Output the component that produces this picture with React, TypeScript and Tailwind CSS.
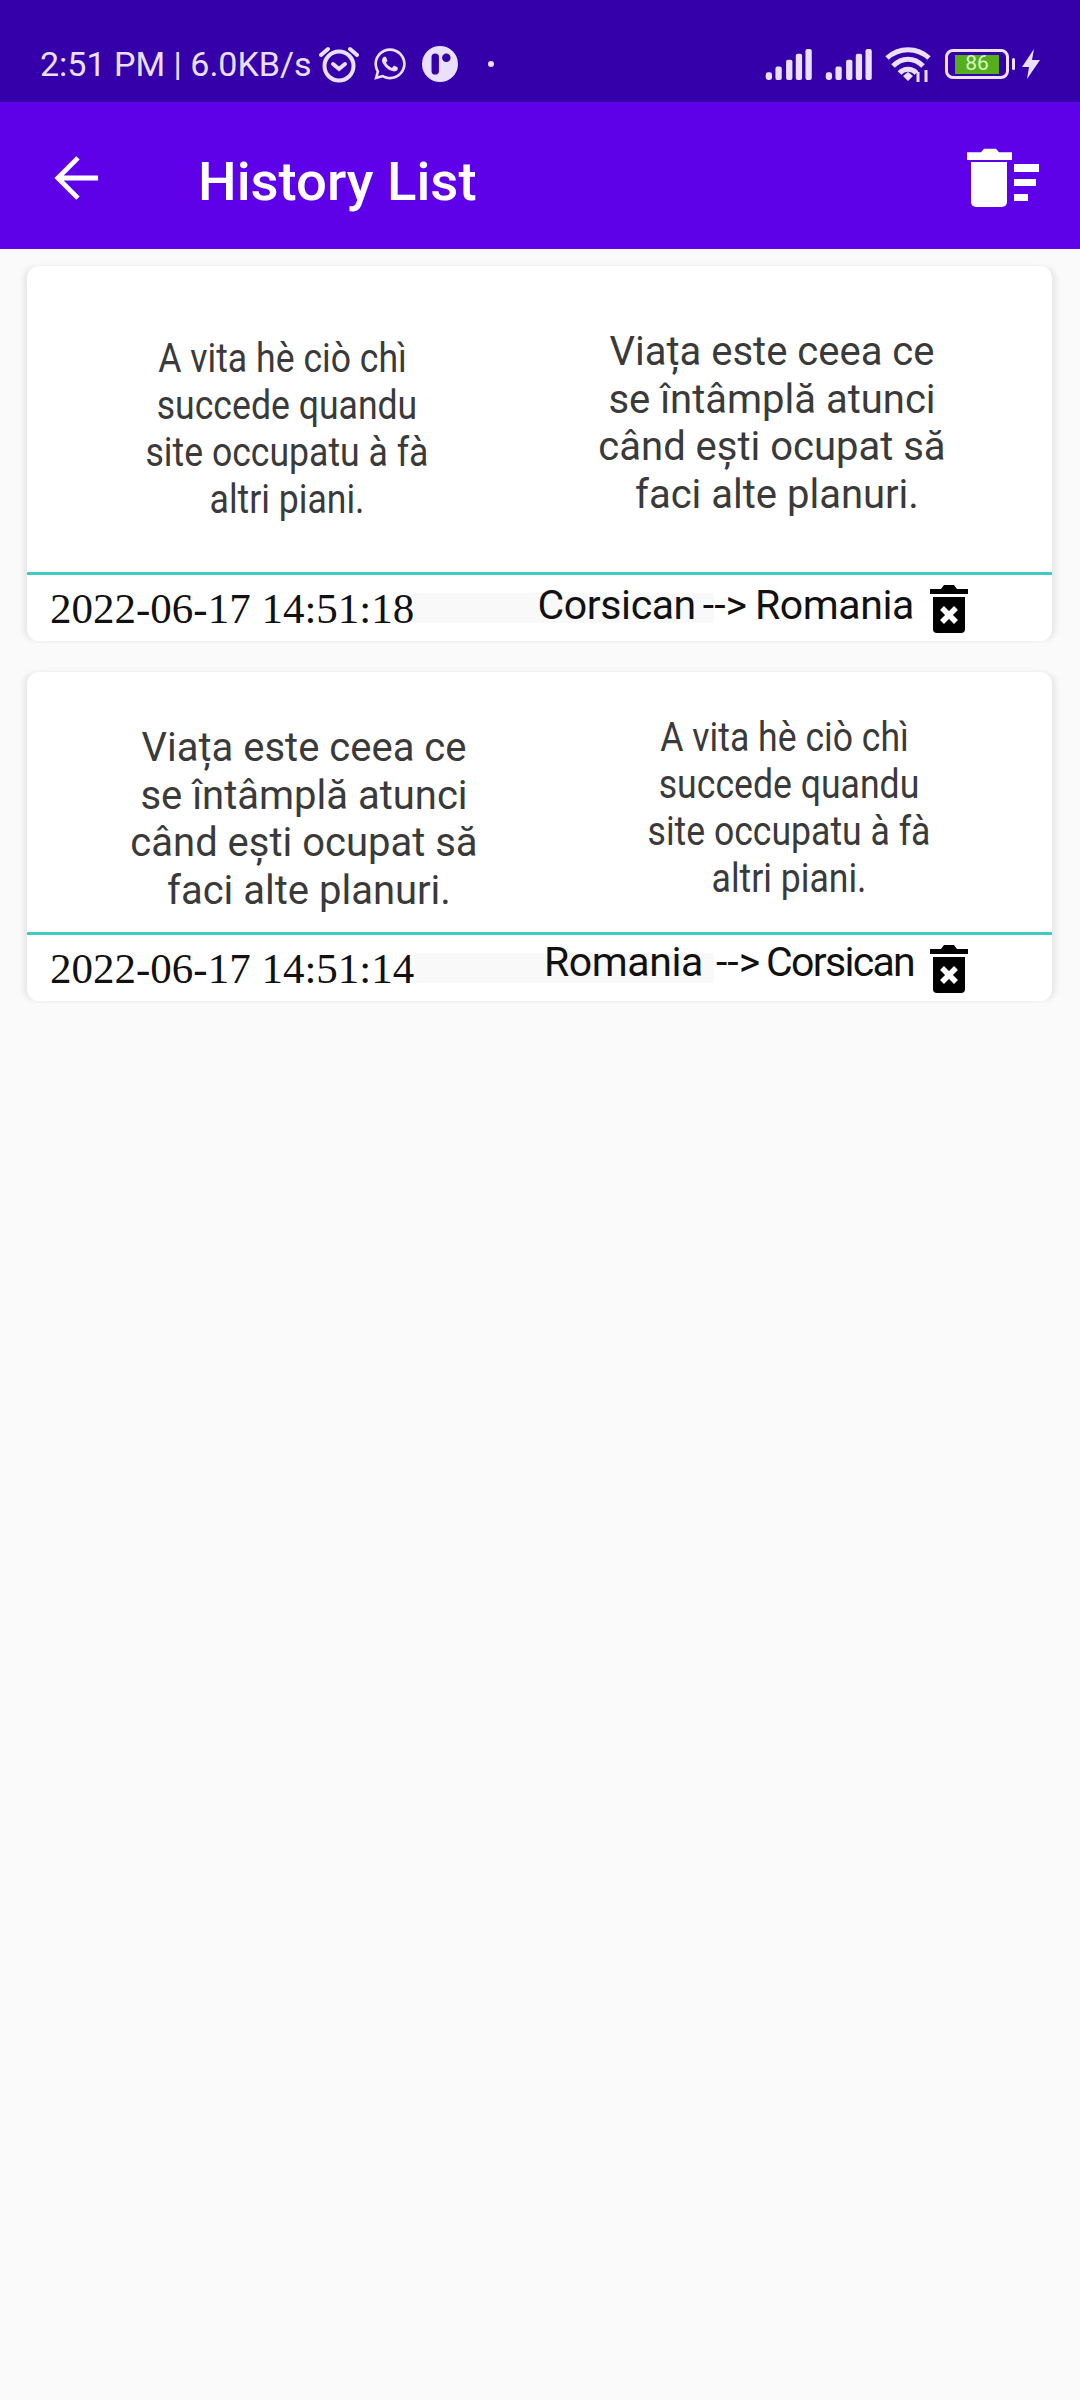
import { FaWhatsapp } from "react-icons/fa";

const CORSICAN = ["A vita hè ciò chì\u00a0", "succede quandu", "site occupatu à fà", "altri piani."];
const ROMANIAN = ["Viața este ceea ce", "se întâmplă atunci", "când ești ocupat să", "\u00a0faci alte planuri."];

function Signal({ className }: { className?: string }) {
  return (
    <svg viewBox="0 0 48 32" className={className} fill="currentColor">
      <rect x="0" y="24" width="6.5" height="8" rx="2.5" />
      <rect x="10" y="18" width="6.5" height="14" rx="2" />
      <rect x="21" y="11" width="6.5" height="21" rx="2" />
      <rect x="31" y="5" width="6.5" height="27" rx="2" />
      <rect x="41" y="0" width="6.5" height="32" rx="2" />
    </svg>
  );
}

function Wifi() {
  return (
    <svg viewBox="0 0 46 36" className="h-[36px] w-[46px]" fill="none" stroke="currentColor" strokeWidth="5">
      <path d="M2 12C14 1 32 1 44 12" />
      <path d="M8 20C17 11 29 11 38 20" />
      <path d="M14.5 27C19 22 27 22 31.5 27" />
      <path d="M18 30l5-4 5 4-5 5z" fill="currentColor" stroke="none" />
      <path d="M33 36V26M41 36V24" strokeWidth="3" />
    </svg>
  );
}

function Bin({ className }: { className?: string }) {
  return (
    <svg viewBox="0 0 38 50" className={className} fill="currentColor">
      <path d="M0 6h11l3-4h10l3 4h11v5H0z" />
      <path d="M3 14h32v32a4 4 0 0 1-4 4H7a4 4 0 0 1-4-4z" />
      <path d="M12 25l14 14M26 25L12 39" stroke="#fff" strokeWidth="5.5" />
    </svg>
  );
}

function Quote({ lines, textClass, className }: { lines: string[]; textClass: string; className: string }) {
  return (
    <div className={`w-[486px] shrink-0 ${className}`}>
      <p className={`text-center font-['Roboto',sans-serif] text-[40px] text-[#3a3a3a] ${textClass}`}>
        {lines.map((line) => (
          <span key={line} className="block">
            {line}
          </span>
        ))}
      </p>
    </div>
  );
}

function HistoryCard({
  left,
  right,
  date,
  languages,
  bodyClass,
}: {
  left: React.ReactNode;
  right: React.ReactNode;
  date: string;
  languages: React.ReactNode;
  bodyClass: string;
}) {
  return (
    <div className="rounded-[12px] bg-white shadow-[-5px_0_5px_-1px_rgba(0,0,0,0.07),5px_0_5px_-1px_rgba(0,0,0,0.07)]">
      <div className={bodyClass}>
        {left}
        {right}
      </div>
      <div className="flex h-[69px] items-center border-t-[3px] border-[#40c9be] pl-[23px] pr-[84px]">
        <span className="w-[364px] shrink-0 whitespace-nowrap font-['Liberation_Serif',serif] text-[43px] leading-none text-[#111111]">
          {date}
        </span>
        <div className="flex h-[30px] flex-1 items-center justify-end bg-[linear-gradient(#f9f9f9,#f9f9f9)] bg-[length:300px_100%] bg-no-repeat font-['Roboto',sans-serif] text-[41px] tracking-[-0.4px] text-[#111111]">
          {languages}
        </div>
        <Bin className="ml-[16px] h-[50px] w-[38px] shrink-0 text-black" />
      </div>
    </div>
  );
}

export default function App() {
  return (
    <div className="min-h-[2400px] bg-[#fafafa]">
      {/* Status bar */}
      <div className="flex h-[102px] items-center justify-between bg-[#3500aa] pl-[40px] pr-[40px] pt-[26px] text-[#ebe0fb]">
        <div className="flex items-center font-['Roboto',sans-serif] text-[34px]">
          <span>2:51 PM | 6.0KB/s</span>
          <svg viewBox="0 0 40 38" className="ml-[7px] h-[38px] w-[40px]" fill="none" stroke="currentColor" strokeWidth="4">
            <circle cx="20" cy="21" r="14.5" />
            <path d="M14 19l6 5 6-5" strokeLinecap="round" />
            <path d="M2 10l7-6M38 10l-7-6" strokeLinecap="round" />
          </svg>
          <FaWhatsapp className="ml-[13px] h-[36px] w-[36px]" />
          <svg viewBox="0 0 34 34" className="ml-[14px] h-[36px] w-[36px]">
            <circle cx="17" cy="17" r="17" fill="currentColor" />
            <rect x="9" y="7" width="7" height="20" rx="3.5" fill="#3500aa" />
            <circle cx="23" cy="11" r="4" fill="#3500aa" />
          </svg>
          <span className="ml-[30px] h-[6px] w-[6px] rounded-full bg-[#ebe0fb]" />
        </div>
        <div className="flex items-center">
          <Signal className="h-[31px] w-[48px]" />
          <Signal className="ml-[12px] h-[31px] w-[48px]" />
          <div className="ml-[12px]">
            <Wifi />
          </div>
          <div className="ml-[14px] flex h-[30px] w-[64px] items-center justify-center rounded-[8px] border-[3px] border-[#f0e0ff]">
            <span className="flex h-[19px] w-[44px] items-center justify-center bg-[#55ae1c] font-['Roboto',sans-serif] text-[21px] text-[#d9f7c6]">
              86
            </span>
          </div>
          <span className="ml-[3px] h-[12px] w-[3px] rounded-full bg-[#f0e0ff]" />
          <svg viewBox="0 0 18 30" className="ml-[7px] h-[30px] w-[18px]" fill="currentColor">
            <path d="M12 0L0 18h7L5 30l13-19h-8z" />
          </svg>
        </div>
      </div>

      {/* App bar */}
      <div className="flex h-[147px] items-center bg-[#5e00e8] pt-[5px] text-white">
        <svg viewBox="0 0 48 48" className="ml-[54px] h-[46px] w-[46px]" fill="none" stroke="currentColor" strokeWidth="5">
          <path d="M46 24H5M25 3L4 24l21 21" />
        </svg>
        <h1 className="ml-[98px] mt-[7px] font-['Roboto',sans-serif] text-[54.5px] font-medium leading-none">History List</h1>
        <svg viewBox="0 0 72 60" className="ml-auto mr-[41px] h-[60px] w-[72px]" fill="currentColor">
          <path d="M0 6h14l3-5h12l3 5h13v11H0z" transform="scale(1 .7)" />
          <path d="M4 14h36v40a5 5 0 0 1-5 5H9a5 5 0 0 1-5-5z" />
          <path d="M47 16h26v8H47zM47 31h22v7H47zM47 46h14v7H47z" />
        </svg>
      </div>

      {/* History cards */}
      <div className="flex flex-col gap-[31px] pl-[27px] pr-[28px] pt-[17px]">
        <HistoryCard
          left={
            <Quote
              lines={CORSICAN}
              textClass="origin-center scale-x-[0.89] pr-[18px] leading-[47px]"
              className="pt-[69px]"
            />
          }
          right={<Quote lines={ROMANIAN} textClass="pr-[18px] leading-[47.7px]" className="pt-[62px]" />}
          date="2022-06-17 14:51:18"
          languages={
            <div className="mb-[4px] flex">
              <span>Corsican</span>
              <span className="ml-[7px] mr-[8px] tracking-normal">--&gt;</span>
              <span>Romania</span>
            </div>
          }
          bodyClass="flex h-[306px] pl-[25px]"
        />
        <HistoryCard
          left={<Quote lines={ROMANIAN} textClass="pl-[18px] leading-[47.7px]" className="pt-[52px]" />}
          right={
            <Quote
              lines={CORSICAN}
              textClass="origin-center scale-x-[0.89] pl-[18px] leading-[47px]"
              className="pt-[42px]"
            />
          }
          date="2022-06-17 14:51:14"
          languages={
            <div className="mb-[10px] flex">
              <span>Romania</span>
              <span className="ml-[13px] mr-[6px] tracking-normal">--&gt;</span>
              <span className="tracking-[-1.7px]">Corsican</span>
            </div>
          }
          bodyClass="flex h-[260px] pl-[25px]"
        />
      </div>
    </div>
  );
}
